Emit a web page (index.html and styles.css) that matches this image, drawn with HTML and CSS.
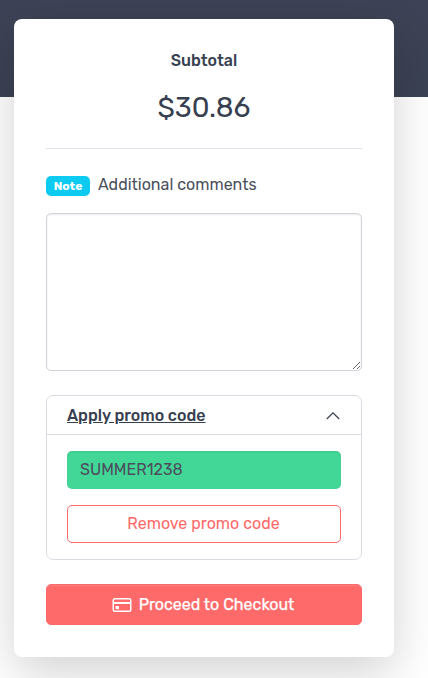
FILE: index.html
```html
<!DOCTYPE html>
<html lang="en">
<head>
<meta charset="utf-8">
<title>Checkout</title>
<link rel="stylesheet" href="styles.css">
</head>
<body>
<main class="page">
  <aside class="card">
    <header class="summary">
      <h2 class="label"><span>Subtotal</span></h2>
      <p class="total"><span>$30.86</span></p>
    </header>
    <div class="note"><span class="badge">Note</span><label class="note-label" for="comments">Additional comments</label></div>
    <textarea class="comments" id="comments"></textarea>
    <section class="promo">
      <div class="promo-head">
        <a class="promo-title">Apply promo code</a>
        <svg class="chevron" width="16" height="16" viewBox="0 0 16 16"><path d="M1.8 11 8 4.9 14.2 11"/></svg>
      </div>
      <div class="promo-body">
        <div class="code"><span>SUMMER1238</span></div>
        <button class="remove">Remove promo code</button>
      </div>
    </section>
    <button class="checkout">
      <svg class="card-icon" width="20" height="16" viewBox="0 0 20 16"><rect x="1.25" y="1.75" width="17.5" height="12.5" rx="1.5"/><path class="stripe" d="M1.5 6h17"/><rect class="chip" x="3.5" y="9" width="3.5" height="3.2" rx=".6"/></svg>
      <span>Proceed to Checkout</span>
    </button>
  </aside>
</main>
</body>
</html>
```
FILE: styles.css
```css
* { box-sizing: border-box; }
body {
  margin: 0;
  font-family: Rubik, Roboto, sans-serif;
  font-size: 16px;
  line-height: 24px;
  color: #4b4f5c;
}
.page {
  height: 678px;
  overflow: hidden;
  padding: 19px 34px 0 14px;
  background: linear-gradient(#3e4256, #3b4254 97px, #fff 97px);
}
.card {
  height: 638px;
  padding: 30px 32px 32px;
  border-radius: 8px;
  background: #fff;
  box-shadow: 0 16px 48px rgba(0, 0, 0, .175);
}
.summary {
  height: 100px;
  border-bottom: 1px solid #dfe2e8;
  text-align: center;
  color: #373f50;
}
.label { margin: 0; font-size: 16px; font-weight: 500; line-height: 24px; }
.total { margin: 17px 0 0; font-size: 28px; line-height: 36px; }
.note { display: flex; align-items: center; height: 24px; margin-top: 24px; }
.badge {
  width: 44px;
  height: 20px;
  margin: 2px 8px 0 0;
  border-radius: 5px;
  background: #0dcaf0;
  color: #fff;
  font-size: 12px;
  font-weight: 700;
  line-height: 20px;
  text-align: center;
}
.comments {
  display: block;
  width: 100%;
  height: 158px;
  margin: 16px 0 24px;
  border: 1px solid #ced4da;
  border-radius: 5px;
  box-shadow: inset 0 1px 2px rgba(0, 0, 0, .075);
  resize: vertical;
  outline: 0;
}
.promo { height: 165px; border: 1px solid #d9dce2; border-radius: 7px; }
.promo-head {
  display: flex;
  align-items: center;
  justify-content: space-between;
  height: 39px;
  padding: 1px 20px 0;
  border-bottom: 1px solid #d9dce2;
}
.promo-title {
  font-weight: 500;
  color: #373f50;
  text-decoration: underline;
}
.chevron { fill: none; stroke: #373f50; stroke-width: 1.2; }
.promo-body { display: flex; flex-direction: column; gap: 16px; padding: 16px 20px; }
.code {
  height: 38px;
  padding: 0 13px;
  border-radius: 5px;
  background: #42d697;
  box-shadow: inset 0 1px 2px rgba(0, 0, 0, .075);
  line-height: 38px;
}
button { font: inherit; cursor: pointer; }
.remove {
  height: 38px;
  padding: 0 1px 0 0;
  border: 1px solid #fe696a;
  border-radius: 5px;
  background: #fff;
  color: #fe696a;
}
.checkout {
  display: flex;
  align-items: center;
  justify-content: center;
  gap: 7px;
  width: 100%;
  height: 41px;
  margin-top: 24px;
  padding: 0 2px 0 0;
  border: 1px solid #fe696a;
  border-radius: 5px;
  background: #fe696a;
  box-shadow: inset 0 1px 0 rgba(255, 255, 255, .15);
  color: #fff;
}
.checkout span { -webkit-text-stroke: .25px #fff; }
.card-icon { fill: none; stroke: #fff; stroke-width: 1.5; }
.stripe { stroke-width: 2; }
.chip { fill: #fff; stroke: none; }
```
